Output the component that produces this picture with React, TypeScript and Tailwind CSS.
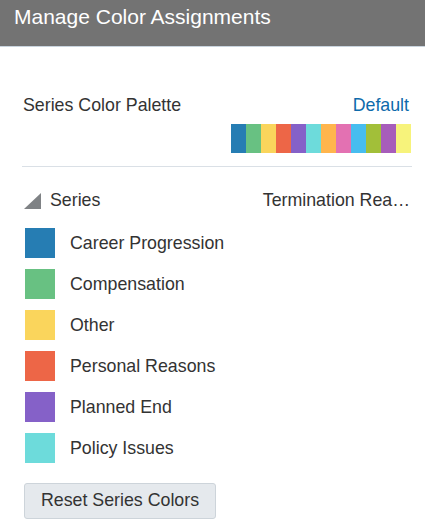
import React from "react";

const palette = ["#267db3","#68c182","#fad55c","#ed6647","#8561c8","#6ddbdb","#ffb54d","#e371b2","#47bdef","#a2bf39","#a75dba","#f7f37b"];
const series = [
  { name: "Career Progression", color: "#267db3" },
  { name: "Compensation", color: "#68c182" },
  { name: "Other", color: "#fad55c" },
  { name: "Personal Reasons", color: "#ed6647" },
  { name: "Planned End", color: "#8561c8" },
  { name: "Policy Issues", color: "#6ddbdb" },
];

export default function App() {
  return (
    <div className="w-[425px] h-[530px] bg-white overflow-hidden text-[#333333]" style={{ fontFamily: '"Liberation Sans", Arial, sans-serif' }}>
      <div className="h-[47px] bg-[#737373] border-b border-[#c9d4de] flex items-start pl-[14px] pt-[5px]">
        <span className="text-white text-[21px] leading-[24px]">Manage Color Assignments</span>
      </div>
      <div className="pl-[22px] pr-[13px] pt-[48px]">
        <div className="flex justify-between items-center pl-[1px] pr-[3px] h-[20px]">
          <span className="text-[17.8px]">Series Color Palette</span>
          <span className="text-[17.8px] text-[#0d6aab]">Default</span>
        </div>
        <div className="flex justify-end mt-[9px] pr-[1px]">
          <div className="flex">
            {palette.map((c, i) => (
              <div key={i} className="w-[15px] h-[29px]" style={{ background: c }} />
            ))}
          </div>
        </div>
        <div className="mt-[13px] border-t border-[#dae0e6] w-[390px]" />
        <div className="flex justify-between mt-[20px] h-[22px]">
          <div className="flex items-center pl-[2px] mt-[5px]">
            <svg width="17" height="16" viewBox="0 0 17 16"><polygon points="17,0 17,16 0,16" fill="#7f8285" /></svg>
            <span className="text-[17.8px] ml-[9px]">Series</span>
          </div>
          <span className="text-[17.8px] pr-[2px]">Termination Rea…</span>
        </div>
        <div className="mt-[19px] flex flex-col gap-[11px] pl-[3px]">
          {series.map((s) => (
            <div key={s.name} className="flex items-center h-[30px]">
              <div className="w-[30px] h-[30px]" style={{ background: s.color }} />
              <span className="text-[17.8px] ml-[15px]">{s.name}</span>
            </div>
          ))}
        </div>
        <button className="mt-[20px] ml-[2px] h-[36px] w-[192px] bg-[#e5e9ed] border border-[#cdd4da] rounded-[3px] text-[17.8px] text-[#333333] leading-none">Reset Series Colors</button>
      </div>
    </div>
  );
}
